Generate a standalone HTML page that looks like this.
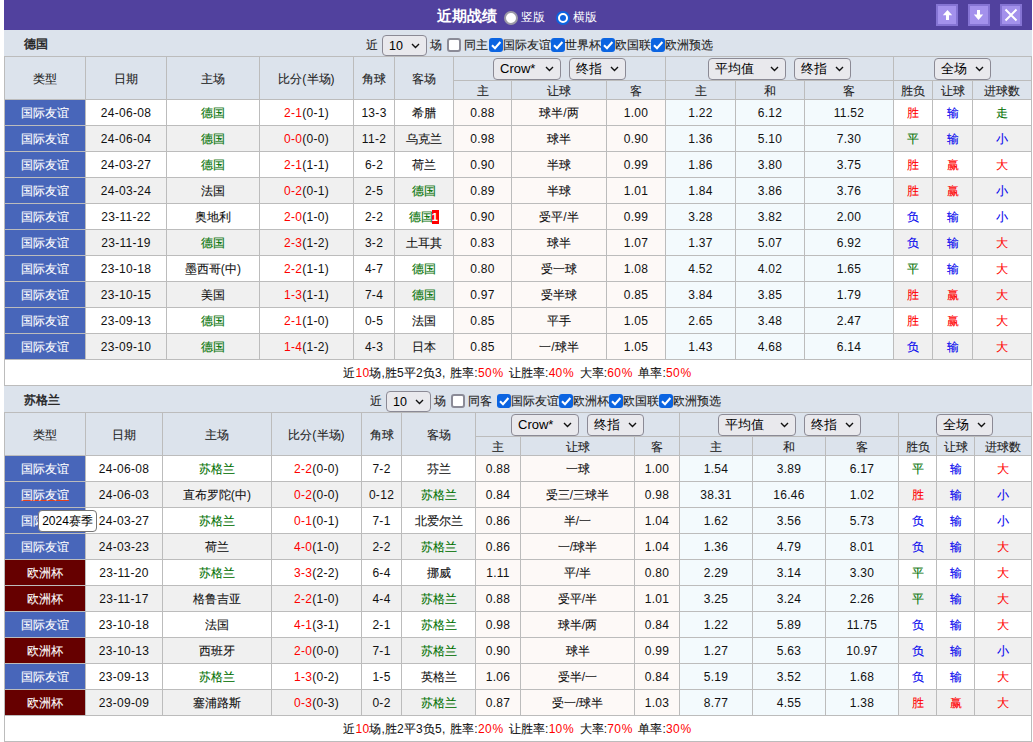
<!DOCTYPE html>
<html><head><meta charset="utf-8"><title>近期战绩</title>
<style>
html,body{margin:0;padding:0;background:#fff;}
body{width:1033px;height:742px;position:relative;overflow:hidden;font-family:"Liberation Sans",sans-serif;font-size:12px;color:#111;}
.c{position:absolute;text-align:center;white-space:nowrap;overflow:visible;letter-spacing:0.3px;}
.tn{position:absolute;font-weight:normal;-webkit-text-stroke:0.45px;color:#222;}
.sel{position:absolute;box-sizing:border-box;border:1px solid #8b8a95;border-radius:4px;background:#e9e9ed;font-size:13px;color:#000;white-space:nowrap;}
.chev{position:absolute;right:6px;top:50%;margin-top:-3px;}
.cb{position:absolute;box-sizing:border-box;width:14px;height:14px;border:2px solid #8b8b97;border-radius:3px;background:#fff;}
.cb.on{border:none;background:#0b64e1;}
.cb svg{position:absolute;left:0;top:0;}
.lb{position:absolute;height:26px;line-height:26px;padding-top:2px;color:#222;white-space:nowrap;}
.tb{position:absolute;top:4px;width:22px;height:22px;box-sizing:border-box;background:#a391ec;border:2px solid #8574d4;}
.tb svg{position:absolute;left:0;top:0;}
.sm{word-spacing:1px;}
.pc{display:inline-block;padding-left:0.5px;padding-right:1px;}
.k{-webkit-text-stroke:0.1px;letter-spacing:0;}
.bd{position:relative;left:-1px;top:-1px;display:inline-block;background:#f00;color:#fff;font-weight:bold;width:7px;height:14px;line-height:14px;font-size:11px;vertical-align:middle;text-align:center;}
</style></head><body>

<div style="position:absolute;left:4px;top:0px;width:1028px;height:30px;background:#51419e;"></div>
<div style="position:absolute;left:437px;top:1px;height:30px;line-height:30px;color:#fff;font-weight:bold;font-size:15px">近期战绩</div>
<div style="position:absolute;left:504px;top:11px;width:14px;height:14px;box-sizing:border-box;border-radius:50%;border:2px solid #9c9aa6;background:#fff"></div>
<div style="position:absolute;left:521px;top:2px;height:30px;line-height:30px;color:#fff;font-size:12px">竖版</div>
<div style="position:absolute;left:556px;top:11px;width:14px;height:14px;box-sizing:border-box;border-radius:50%;border:2px solid #0b64e1;background:#fff"><div style="position:absolute;left:2px;top:2px;width:6px;height:6px;border-radius:50%;background:#0b64e1"></div></div>
<div style="position:absolute;left:573px;top:2px;height:30px;line-height:30px;color:#fff;font-size:12px">横版</div>
<div class="tb" style="left:936px"><svg width="18" height="18" viewBox="0 0 18 18"><path d="M4.8 9.2 L9.5 4 L14.2 9.2 Z M8 9 H11 V14 H8 Z" fill="#fff"/></svg></div>
<div class="tb" style="left:968px"><svg width="18" height="18" viewBox="0 0 18 18"><path d="M7 4 H10 V9 H7 Z M3.8 8.6 H13.2 L8.5 14 Z" fill="#fff"/></svg></div>
<div class="tb" style="left:1000px"><svg width="18" height="18" viewBox="0 0 18 18"><path d="M3.5 3.5 L14.5 14.5 M14.5 3.5 L3.5 14.5" stroke="#fff" stroke-width="2"/></svg></div>
<div style="position:absolute;left:4px;top:30px;width:1028px;height:26px;background:#dce3ec;"></div>
<div class="tn" style="left:24px;top:31px;height:26px;line-height:26px">德国</div>
<div class="lb" style="left:366px;top:30px;"><span class="k">近</span></div>
<div class="sel" style="left:382px;top:35px;width:45px;height:21px;line-height:19px"><span style="padding-left:6px;font-size:12.5px">10</span><svg class="chev" width="9" height="6" viewBox="0 0 9 6"><path d="M1 1 L4.5 4.5 L8 1" fill="none" stroke="#111" stroke-width="1.4"/></svg></div>
<div class="lb" style="left:430px;top:30px;"><span class="k">场</span></div>
<div class="cb" style="left:447px;top:38px"></div>
<div class="lb" style="left:464px;top:30px;"><span class="k">同主</span></div>
<div class="cb on" style="left:489px;top:38px"><svg width="14" height="14" viewBox="0 0 14 14"><path d="M3 7.3 L6 10.3 L11.4 4" fill="none" stroke="#fff" stroke-width="2.1"/></svg></div>
<div class="lb" style="left:503px;top:30px;"><span class="k">国际友谊</span></div>
<div class="cb on" style="left:551px;top:38px"><svg width="14" height="14" viewBox="0 0 14 14"><path d="M3 7.3 L6 10.3 L11.4 4" fill="none" stroke="#fff" stroke-width="2.1"/></svg></div>
<div class="lb" style="left:565px;top:30px;"><span class="k">世界杯</span></div>
<div class="cb on" style="left:601px;top:38px"><svg width="14" height="14" viewBox="0 0 14 14"><path d="M3 7.3 L6 10.3 L11.4 4" fill="none" stroke="#fff" stroke-width="2.1"/></svg></div>
<div class="lb" style="left:615px;top:30px;"><span class="k">欧国联</span></div>
<div class="cb on" style="left:651px;top:38px"><svg width="14" height="14" viewBox="0 0 14 14"><path d="M3 7.3 L6 10.3 L11.4 4" fill="none" stroke="#fff" stroke-width="2.1"/></svg></div>
<div class="lb" style="left:665px;top:30px;"><span class="k">欧洲预选</span></div>
<div style="position:absolute;left:4px;top:56px;width:1028px;height:43px;background:#dce3ec;"></div>
<div style="position:absolute;left:5px;top:100px;width:1026px;height:25px;background:#ffffff;"></div>
<div style="position:absolute;left:454px;top:100px;width:211px;height:25px;background:#fdf9f7;"></div>
<div style="position:absolute;left:666px;top:100px;width:227px;height:25px;background:#f3fafd;"></div>
<div style="position:absolute;left:5px;top:100px;width:80px;height:25px;background:#4866ba;"></div>
<div style="position:absolute;left:5px;top:126px;width:1026px;height:25px;background:#f0f0f0;"></div>
<div style="position:absolute;left:454px;top:126px;width:211px;height:25px;background:#fdf9f7;"></div>
<div style="position:absolute;left:666px;top:126px;width:227px;height:25px;background:#f3fafd;"></div>
<div style="position:absolute;left:5px;top:126px;width:80px;height:25px;background:#4866ba;"></div>
<div style="position:absolute;left:5px;top:152px;width:1026px;height:25px;background:#ffffff;"></div>
<div style="position:absolute;left:454px;top:152px;width:211px;height:25px;background:#fdf9f7;"></div>
<div style="position:absolute;left:666px;top:152px;width:227px;height:25px;background:#f3fafd;"></div>
<div style="position:absolute;left:5px;top:152px;width:80px;height:25px;background:#4866ba;"></div>
<div style="position:absolute;left:5px;top:178px;width:1026px;height:25px;background:#f0f0f0;"></div>
<div style="position:absolute;left:454px;top:178px;width:211px;height:25px;background:#fdf9f7;"></div>
<div style="position:absolute;left:666px;top:178px;width:227px;height:25px;background:#f3fafd;"></div>
<div style="position:absolute;left:5px;top:178px;width:80px;height:25px;background:#4866ba;"></div>
<div style="position:absolute;left:5px;top:204px;width:1026px;height:25px;background:#ffffff;"></div>
<div style="position:absolute;left:454px;top:204px;width:211px;height:25px;background:#fdf9f7;"></div>
<div style="position:absolute;left:666px;top:204px;width:227px;height:25px;background:#f3fafd;"></div>
<div style="position:absolute;left:5px;top:204px;width:80px;height:25px;background:#4866ba;"></div>
<div style="position:absolute;left:5px;top:230px;width:1026px;height:25px;background:#f0f0f0;"></div>
<div style="position:absolute;left:454px;top:230px;width:211px;height:25px;background:#fdf9f7;"></div>
<div style="position:absolute;left:666px;top:230px;width:227px;height:25px;background:#f3fafd;"></div>
<div style="position:absolute;left:5px;top:230px;width:80px;height:25px;background:#4866ba;"></div>
<div style="position:absolute;left:5px;top:256px;width:1026px;height:25px;background:#ffffff;"></div>
<div style="position:absolute;left:454px;top:256px;width:211px;height:25px;background:#fdf9f7;"></div>
<div style="position:absolute;left:666px;top:256px;width:227px;height:25px;background:#f3fafd;"></div>
<div style="position:absolute;left:5px;top:256px;width:80px;height:25px;background:#4866ba;"></div>
<div style="position:absolute;left:5px;top:282px;width:1026px;height:25px;background:#f0f0f0;"></div>
<div style="position:absolute;left:454px;top:282px;width:211px;height:25px;background:#fdf9f7;"></div>
<div style="position:absolute;left:666px;top:282px;width:227px;height:25px;background:#f3fafd;"></div>
<div style="position:absolute;left:5px;top:282px;width:80px;height:25px;background:#4866ba;"></div>
<div style="position:absolute;left:5px;top:308px;width:1026px;height:25px;background:#ffffff;"></div>
<div style="position:absolute;left:454px;top:308px;width:211px;height:25px;background:#fdf9f7;"></div>
<div style="position:absolute;left:666px;top:308px;width:227px;height:25px;background:#f3fafd;"></div>
<div style="position:absolute;left:5px;top:308px;width:80px;height:25px;background:#4866ba;"></div>
<div style="position:absolute;left:5px;top:334px;width:1026px;height:25px;background:#f0f0f0;"></div>
<div style="position:absolute;left:454px;top:334px;width:211px;height:25px;background:#fdf9f7;"></div>
<div style="position:absolute;left:666px;top:334px;width:227px;height:25px;background:#f3fafd;"></div>
<div style="position:absolute;left:5px;top:334px;width:80px;height:25px;background:#4866ba;"></div>
<div style="position:absolute;left:5px;top:360px;width:1026px;height:25px;background:#ffffff;"></div>
<div style="position:absolute;left:4px;top:56px;width:1028px;height:1px;background:#bcbcbc;"></div>
<div style="position:absolute;left:453px;top:80px;width:578px;height:1px;background:#bcbcbc;"></div>
<div style="position:absolute;left:4px;top:99px;width:1028px;height:1px;background:#bcbcbc;"></div>
<div style="position:absolute;left:4px;top:125px;width:1028px;height:1px;background:#bcbcbc;"></div>
<div style="position:absolute;left:4px;top:151px;width:1028px;height:1px;background:#bcbcbc;"></div>
<div style="position:absolute;left:4px;top:177px;width:1028px;height:1px;background:#bcbcbc;"></div>
<div style="position:absolute;left:4px;top:203px;width:1028px;height:1px;background:#bcbcbc;"></div>
<div style="position:absolute;left:4px;top:229px;width:1028px;height:1px;background:#bcbcbc;"></div>
<div style="position:absolute;left:4px;top:255px;width:1028px;height:1px;background:#bcbcbc;"></div>
<div style="position:absolute;left:4px;top:281px;width:1028px;height:1px;background:#bcbcbc;"></div>
<div style="position:absolute;left:4px;top:307px;width:1028px;height:1px;background:#bcbcbc;"></div>
<div style="position:absolute;left:4px;top:333px;width:1028px;height:1px;background:#bcbcbc;"></div>
<div style="position:absolute;left:4px;top:359px;width:1028px;height:1px;background:#bcbcbc;"></div>
<div style="position:absolute;left:4px;top:385px;width:1028px;height:1px;background:#bcbcbc;"></div>
<div style="position:absolute;left:4px;top:56px;width:1px;height:330px;background:#bcbcbc;"></div>
<div style="position:absolute;left:1031px;top:56px;width:1px;height:330px;background:#bcbcbc;"></div>
<div style="position:absolute;left:85px;top:56px;width:1px;height:303px;background:#bcbcbc;"></div>
<div style="position:absolute;left:166px;top:56px;width:1px;height:303px;background:#bcbcbc;"></div>
<div style="position:absolute;left:259px;top:56px;width:1px;height:303px;background:#bcbcbc;"></div>
<div style="position:absolute;left:353px;top:56px;width:1px;height:303px;background:#bcbcbc;"></div>
<div style="position:absolute;left:394px;top:56px;width:1px;height:303px;background:#bcbcbc;"></div>
<div style="position:absolute;left:453px;top:56px;width:1px;height:303px;background:#bcbcbc;"></div>
<div style="position:absolute;left:511px;top:80px;width:1px;height:279px;background:#bcbcbc;"></div>
<div style="position:absolute;left:606px;top:80px;width:1px;height:279px;background:#bcbcbc;"></div>
<div style="position:absolute;left:665px;top:56px;width:1px;height:303px;background:#bcbcbc;"></div>
<div style="position:absolute;left:735px;top:80px;width:1px;height:279px;background:#bcbcbc;"></div>
<div style="position:absolute;left:804px;top:80px;width:1px;height:279px;background:#bcbcbc;"></div>
<div style="position:absolute;left:893px;top:56px;width:1px;height:303px;background:#bcbcbc;"></div>
<div style="position:absolute;left:932px;top:80px;width:1px;height:279px;background:#bcbcbc;"></div>
<div style="position:absolute;left:972px;top:80px;width:1px;height:279px;background:#bcbcbc;"></div>
<div class="sel" style="left:493px;top:58px;width:68px;height:22px;line-height:20px"><span style="padding-left:6px">Crow*</span><svg class="chev" width="9" height="6" viewBox="0 0 9 6"><path d="M1 1 L4.5 4.5 L8 1" fill="none" stroke="#111" stroke-width="1.4"/></svg></div>
<div class="sel" style="left:569px;top:58px;width:57px;height:22px;line-height:20px"><span style="padding-left:6px">终指</span><svg class="chev" width="9" height="6" viewBox="0 0 9 6"><path d="M1 1 L4.5 4.5 L8 1" fill="none" stroke="#111" stroke-width="1.4"/></svg></div>
<div class="sel" style="left:708px;top:58px;width:78px;height:22px;line-height:20px"><span style="padding-left:6px">平均值</span><svg class="chev" width="9" height="6" viewBox="0 0 9 6"><path d="M1 1 L4.5 4.5 L8 1" fill="none" stroke="#111" stroke-width="1.4"/></svg></div>
<div class="sel" style="left:794px;top:58px;width:57px;height:22px;line-height:20px"><span style="padding-left:6px">终指</span><svg class="chev" width="9" height="6" viewBox="0 0 9 6"><path d="M1 1 L4.5 4.5 L8 1" fill="none" stroke="#111" stroke-width="1.4"/></svg></div>
<div class="sel" style="left:934px;top:58px;width:57px;height:22px;line-height:20px"><span style="padding-left:6px">全场</span><svg class="chev" width="9" height="6" viewBox="0 0 9 6"><path d="M1 1 L4.5 4.5 L8 1" fill="none" stroke="#111" stroke-width="1.4"/></svg></div>
<div class="c" style="left:5px;top:58px;width:80px;height:42px;line-height:42px;color:#222"><span class="k">类型</span></div>
<div class="c" style="left:86px;top:58px;width:80px;height:42px;line-height:42px;color:#222"><span class="k">日期</span></div>
<div class="c" style="left:167px;top:58px;width:92px;height:42px;line-height:42px;color:#222"><span class="k">主场</span></div>
<div class="c" style="left:260px;top:58px;width:93px;height:42px;line-height:42px;color:#222"><span class="k">比分</span>(<span class="k">半场</span>)</div>
<div class="c" style="left:354px;top:58px;width:40px;height:42px;line-height:42px;color:#222"><span class="k">角球</span></div>
<div class="c" style="left:395px;top:58px;width:58px;height:42px;line-height:42px;color:#222"><span class="k">客场</span></div>
<div class="c" style="left:454px;top:82px;width:57px;height:18px;line-height:18px;color:#222"><span class="k">主</span></div>
<div class="c" style="left:512px;top:82px;width:94px;height:18px;line-height:18px;color:#222"><span class="k">让球</span></div>
<div class="c" style="left:607px;top:82px;width:58px;height:18px;line-height:18px;color:#222"><span class="k">客</span></div>
<div class="c" style="left:666px;top:82px;width:69px;height:18px;line-height:18px;color:#222"><span class="k">主</span></div>
<div class="c" style="left:736px;top:82px;width:68px;height:18px;line-height:18px;color:#222"><span class="k">和</span></div>
<div class="c" style="left:805px;top:82px;width:88px;height:18px;line-height:18px;color:#222"><span class="k">客</span></div>
<div class="c" style="left:894px;top:82px;width:38px;height:18px;line-height:18px;color:#222"><span class="k">胜负</span></div>
<div class="c" style="left:933px;top:82px;width:39px;height:18px;line-height:18px;color:#222"><span class="k">让球</span></div>
<div class="c" style="left:973px;top:82px;width:58px;height:18px;line-height:18px;color:#222"><span class="k">进球数</span></div>
<div class="c" style="left:5px;top:101px;width:80px;height:25px;line-height:25px;color:#fff"><span class="k">国际友谊</span></div>
<div class="c" style="left:86px;top:101px;width:80px;height:25px;line-height:25px;">24-06-08</div>
<div class="c" style="left:167px;top:101px;width:92px;height:25px;line-height:25px;color:#007000"><span class="k">德国</span></div>
<div class="c" style="left:260px;top:101px;width:93px;height:25px;line-height:25px;"><span style="color:#ff0000">2-1</span>(0-1)</div>
<div class="c" style="left:354px;top:101px;width:40px;height:25px;line-height:25px;">13-3</div>
<div class="c" style="left:395px;top:101px;width:58px;height:25px;line-height:25px;"><span class="k">希腊</span></div>
<div class="c" style="left:454px;top:101px;width:57px;height:25px;line-height:25px;">0.88</div>
<div class="c" style="left:512px;top:101px;width:94px;height:25px;line-height:25px;"><span class="k">球半</span>/<span class="k">两</span></div>
<div class="c" style="left:607px;top:101px;width:58px;height:25px;line-height:25px;">1.00</div>
<div class="c" style="left:666px;top:101px;width:69px;height:25px;line-height:25px;">1.22</div>
<div class="c" style="left:736px;top:101px;width:68px;height:25px;line-height:25px;">6.12</div>
<div class="c" style="left:805px;top:101px;width:88px;height:25px;line-height:25px;">11.52</div>
<div class="c" style="left:894px;top:101px;width:38px;height:25px;line-height:25px;color:#ff0000"><span class="k">胜</span></div>
<div class="c" style="left:933px;top:101px;width:39px;height:25px;line-height:25px;color:#0000ee"><span class="k">输</span></div>
<div class="c" style="left:973px;top:101px;width:58px;height:25px;line-height:25px;color:#007000"><span class="k">走</span></div>
<div class="c" style="left:5px;top:127px;width:80px;height:25px;line-height:25px;color:#fff"><span class="k">国际友谊</span></div>
<div class="c" style="left:86px;top:127px;width:80px;height:25px;line-height:25px;">24-06-04</div>
<div class="c" style="left:167px;top:127px;width:92px;height:25px;line-height:25px;color:#007000"><span class="k">德国</span></div>
<div class="c" style="left:260px;top:127px;width:93px;height:25px;line-height:25px;"><span style="color:#ff0000">0-0</span>(0-0)</div>
<div class="c" style="left:354px;top:127px;width:40px;height:25px;line-height:25px;">11-2</div>
<div class="c" style="left:395px;top:127px;width:58px;height:25px;line-height:25px;"><span class="k">乌克兰</span></div>
<div class="c" style="left:454px;top:127px;width:57px;height:25px;line-height:25px;">0.98</div>
<div class="c" style="left:512px;top:127px;width:94px;height:25px;line-height:25px;"><span class="k">球半</span></div>
<div class="c" style="left:607px;top:127px;width:58px;height:25px;line-height:25px;">0.90</div>
<div class="c" style="left:666px;top:127px;width:69px;height:25px;line-height:25px;">1.36</div>
<div class="c" style="left:736px;top:127px;width:68px;height:25px;line-height:25px;">5.10</div>
<div class="c" style="left:805px;top:127px;width:88px;height:25px;line-height:25px;">7.30</div>
<div class="c" style="left:894px;top:127px;width:38px;height:25px;line-height:25px;color:#007000"><span class="k">平</span></div>
<div class="c" style="left:933px;top:127px;width:39px;height:25px;line-height:25px;color:#0000ee"><span class="k">输</span></div>
<div class="c" style="left:973px;top:127px;width:58px;height:25px;line-height:25px;color:#0000ee"><span class="k">小</span></div>
<div class="c" style="left:5px;top:153px;width:80px;height:25px;line-height:25px;color:#fff"><span class="k">国际友谊</span></div>
<div class="c" style="left:86px;top:153px;width:80px;height:25px;line-height:25px;">24-03-27</div>
<div class="c" style="left:167px;top:153px;width:92px;height:25px;line-height:25px;color:#007000"><span class="k">德国</span></div>
<div class="c" style="left:260px;top:153px;width:93px;height:25px;line-height:25px;"><span style="color:#ff0000">2-1</span>(1-1)</div>
<div class="c" style="left:354px;top:153px;width:40px;height:25px;line-height:25px;">6-2</div>
<div class="c" style="left:395px;top:153px;width:58px;height:25px;line-height:25px;"><span class="k">荷兰</span></div>
<div class="c" style="left:454px;top:153px;width:57px;height:25px;line-height:25px;">0.90</div>
<div class="c" style="left:512px;top:153px;width:94px;height:25px;line-height:25px;"><span class="k">半球</span></div>
<div class="c" style="left:607px;top:153px;width:58px;height:25px;line-height:25px;">0.99</div>
<div class="c" style="left:666px;top:153px;width:69px;height:25px;line-height:25px;">1.86</div>
<div class="c" style="left:736px;top:153px;width:68px;height:25px;line-height:25px;">3.80</div>
<div class="c" style="left:805px;top:153px;width:88px;height:25px;line-height:25px;">3.75</div>
<div class="c" style="left:894px;top:153px;width:38px;height:25px;line-height:25px;color:#ff0000"><span class="k">胜</span></div>
<div class="c" style="left:933px;top:153px;width:39px;height:25px;line-height:25px;color:#ff0000"><span class="k">赢</span></div>
<div class="c" style="left:973px;top:153px;width:58px;height:25px;line-height:25px;color:#ff0000"><span class="k">大</span></div>
<div class="c" style="left:5px;top:179px;width:80px;height:25px;line-height:25px;color:#fff"><span class="k">国际友谊</span></div>
<div class="c" style="left:86px;top:179px;width:80px;height:25px;line-height:25px;">24-03-24</div>
<div class="c" style="left:167px;top:179px;width:92px;height:25px;line-height:25px;"><span class="k">法国</span></div>
<div class="c" style="left:260px;top:179px;width:93px;height:25px;line-height:25px;"><span style="color:#ff0000">0-2</span>(0-1)</div>
<div class="c" style="left:354px;top:179px;width:40px;height:25px;line-height:25px;">2-5</div>
<div class="c" style="left:395px;top:179px;width:58px;height:25px;line-height:25px;color:#007000"><span class="k">德国</span></div>
<div class="c" style="left:454px;top:179px;width:57px;height:25px;line-height:25px;">0.89</div>
<div class="c" style="left:512px;top:179px;width:94px;height:25px;line-height:25px;"><span class="k">半球</span></div>
<div class="c" style="left:607px;top:179px;width:58px;height:25px;line-height:25px;">1.01</div>
<div class="c" style="left:666px;top:179px;width:69px;height:25px;line-height:25px;">1.84</div>
<div class="c" style="left:736px;top:179px;width:68px;height:25px;line-height:25px;">3.86</div>
<div class="c" style="left:805px;top:179px;width:88px;height:25px;line-height:25px;">3.76</div>
<div class="c" style="left:894px;top:179px;width:38px;height:25px;line-height:25px;color:#ff0000"><span class="k">胜</span></div>
<div class="c" style="left:933px;top:179px;width:39px;height:25px;line-height:25px;color:#ff0000"><span class="k">赢</span></div>
<div class="c" style="left:973px;top:179px;width:58px;height:25px;line-height:25px;color:#0000ee"><span class="k">小</span></div>
<div class="c" style="left:5px;top:205px;width:80px;height:25px;line-height:25px;color:#fff"><span class="k">国际友谊</span></div>
<div class="c" style="left:86px;top:205px;width:80px;height:25px;line-height:25px;">23-11-22</div>
<div class="c" style="left:167px;top:205px;width:92px;height:25px;line-height:25px;"><span class="k">奥地利</span></div>
<div class="c" style="left:260px;top:205px;width:93px;height:25px;line-height:25px;"><span style="color:#ff0000">2-0</span>(1-0)</div>
<div class="c" style="left:354px;top:205px;width:40px;height:25px;line-height:25px;">2-2</div>
<div class="c" style="left:395px;top:205px;width:58px;height:25px;line-height:25px;color:#007000"><span class="k">德国</span><span class="bd">1</span></div>
<div class="c" style="left:454px;top:205px;width:57px;height:25px;line-height:25px;">0.90</div>
<div class="c" style="left:512px;top:205px;width:94px;height:25px;line-height:25px;"><span class="k">受平</span>/<span class="k">半</span></div>
<div class="c" style="left:607px;top:205px;width:58px;height:25px;line-height:25px;">0.99</div>
<div class="c" style="left:666px;top:205px;width:69px;height:25px;line-height:25px;">3.28</div>
<div class="c" style="left:736px;top:205px;width:68px;height:25px;line-height:25px;">3.82</div>
<div class="c" style="left:805px;top:205px;width:88px;height:25px;line-height:25px;">2.00</div>
<div class="c" style="left:894px;top:205px;width:38px;height:25px;line-height:25px;color:#0000ee"><span class="k">负</span></div>
<div class="c" style="left:933px;top:205px;width:39px;height:25px;line-height:25px;color:#0000ee"><span class="k">输</span></div>
<div class="c" style="left:973px;top:205px;width:58px;height:25px;line-height:25px;color:#0000ee"><span class="k">小</span></div>
<div class="c" style="left:5px;top:231px;width:80px;height:25px;line-height:25px;color:#fff"><span class="k">国际友谊</span></div>
<div class="c" style="left:86px;top:231px;width:80px;height:25px;line-height:25px;">23-11-19</div>
<div class="c" style="left:167px;top:231px;width:92px;height:25px;line-height:25px;color:#007000"><span class="k">德国</span></div>
<div class="c" style="left:260px;top:231px;width:93px;height:25px;line-height:25px;"><span style="color:#ff0000">2-3</span>(1-2)</div>
<div class="c" style="left:354px;top:231px;width:40px;height:25px;line-height:25px;">3-2</div>
<div class="c" style="left:395px;top:231px;width:58px;height:25px;line-height:25px;"><span class="k">土耳其</span></div>
<div class="c" style="left:454px;top:231px;width:57px;height:25px;line-height:25px;">0.83</div>
<div class="c" style="left:512px;top:231px;width:94px;height:25px;line-height:25px;"><span class="k">球半</span></div>
<div class="c" style="left:607px;top:231px;width:58px;height:25px;line-height:25px;">1.07</div>
<div class="c" style="left:666px;top:231px;width:69px;height:25px;line-height:25px;">1.37</div>
<div class="c" style="left:736px;top:231px;width:68px;height:25px;line-height:25px;">5.07</div>
<div class="c" style="left:805px;top:231px;width:88px;height:25px;line-height:25px;">6.92</div>
<div class="c" style="left:894px;top:231px;width:38px;height:25px;line-height:25px;color:#0000ee"><span class="k">负</span></div>
<div class="c" style="left:933px;top:231px;width:39px;height:25px;line-height:25px;color:#0000ee"><span class="k">输</span></div>
<div class="c" style="left:973px;top:231px;width:58px;height:25px;line-height:25px;color:#ff0000"><span class="k">大</span></div>
<div class="c" style="left:5px;top:257px;width:80px;height:25px;line-height:25px;color:#fff"><span class="k">国际友谊</span></div>
<div class="c" style="left:86px;top:257px;width:80px;height:25px;line-height:25px;">23-10-18</div>
<div class="c" style="left:167px;top:257px;width:92px;height:25px;line-height:25px;"><span class="k">墨西哥</span>(<span class="k">中</span>)</div>
<div class="c" style="left:260px;top:257px;width:93px;height:25px;line-height:25px;"><span style="color:#ff0000">2-2</span>(1-1)</div>
<div class="c" style="left:354px;top:257px;width:40px;height:25px;line-height:25px;">4-7</div>
<div class="c" style="left:395px;top:257px;width:58px;height:25px;line-height:25px;color:#007000"><span class="k">德国</span></div>
<div class="c" style="left:454px;top:257px;width:57px;height:25px;line-height:25px;">0.80</div>
<div class="c" style="left:512px;top:257px;width:94px;height:25px;line-height:25px;"><span class="k">受一球</span></div>
<div class="c" style="left:607px;top:257px;width:58px;height:25px;line-height:25px;">1.08</div>
<div class="c" style="left:666px;top:257px;width:69px;height:25px;line-height:25px;">4.52</div>
<div class="c" style="left:736px;top:257px;width:68px;height:25px;line-height:25px;">4.02</div>
<div class="c" style="left:805px;top:257px;width:88px;height:25px;line-height:25px;">1.65</div>
<div class="c" style="left:894px;top:257px;width:38px;height:25px;line-height:25px;color:#007000"><span class="k">平</span></div>
<div class="c" style="left:933px;top:257px;width:39px;height:25px;line-height:25px;color:#0000ee"><span class="k">输</span></div>
<div class="c" style="left:973px;top:257px;width:58px;height:25px;line-height:25px;color:#ff0000"><span class="k">大</span></div>
<div class="c" style="left:5px;top:283px;width:80px;height:25px;line-height:25px;color:#fff"><span class="k">国际友谊</span></div>
<div class="c" style="left:86px;top:283px;width:80px;height:25px;line-height:25px;">23-10-15</div>
<div class="c" style="left:167px;top:283px;width:92px;height:25px;line-height:25px;"><span class="k">美国</span></div>
<div class="c" style="left:260px;top:283px;width:93px;height:25px;line-height:25px;"><span style="color:#ff0000">1-3</span>(1-1)</div>
<div class="c" style="left:354px;top:283px;width:40px;height:25px;line-height:25px;">7-4</div>
<div class="c" style="left:395px;top:283px;width:58px;height:25px;line-height:25px;color:#007000"><span class="k">德国</span></div>
<div class="c" style="left:454px;top:283px;width:57px;height:25px;line-height:25px;">0.97</div>
<div class="c" style="left:512px;top:283px;width:94px;height:25px;line-height:25px;"><span class="k">受半球</span></div>
<div class="c" style="left:607px;top:283px;width:58px;height:25px;line-height:25px;">0.85</div>
<div class="c" style="left:666px;top:283px;width:69px;height:25px;line-height:25px;">3.84</div>
<div class="c" style="left:736px;top:283px;width:68px;height:25px;line-height:25px;">3.85</div>
<div class="c" style="left:805px;top:283px;width:88px;height:25px;line-height:25px;">1.79</div>
<div class="c" style="left:894px;top:283px;width:38px;height:25px;line-height:25px;color:#ff0000"><span class="k">胜</span></div>
<div class="c" style="left:933px;top:283px;width:39px;height:25px;line-height:25px;color:#ff0000"><span class="k">赢</span></div>
<div class="c" style="left:973px;top:283px;width:58px;height:25px;line-height:25px;color:#ff0000"><span class="k">大</span></div>
<div class="c" style="left:5px;top:309px;width:80px;height:25px;line-height:25px;color:#fff"><span class="k">国际友谊</span></div>
<div class="c" style="left:86px;top:309px;width:80px;height:25px;line-height:25px;">23-09-13</div>
<div class="c" style="left:167px;top:309px;width:92px;height:25px;line-height:25px;color:#007000"><span class="k">德国</span></div>
<div class="c" style="left:260px;top:309px;width:93px;height:25px;line-height:25px;"><span style="color:#ff0000">2-1</span>(1-0)</div>
<div class="c" style="left:354px;top:309px;width:40px;height:25px;line-height:25px;">0-5</div>
<div class="c" style="left:395px;top:309px;width:58px;height:25px;line-height:25px;"><span class="k">法国</span></div>
<div class="c" style="left:454px;top:309px;width:57px;height:25px;line-height:25px;">0.85</div>
<div class="c" style="left:512px;top:309px;width:94px;height:25px;line-height:25px;"><span class="k">平手</span></div>
<div class="c" style="left:607px;top:309px;width:58px;height:25px;line-height:25px;">1.05</div>
<div class="c" style="left:666px;top:309px;width:69px;height:25px;line-height:25px;">2.65</div>
<div class="c" style="left:736px;top:309px;width:68px;height:25px;line-height:25px;">3.48</div>
<div class="c" style="left:805px;top:309px;width:88px;height:25px;line-height:25px;">2.47</div>
<div class="c" style="left:894px;top:309px;width:38px;height:25px;line-height:25px;color:#ff0000"><span class="k">胜</span></div>
<div class="c" style="left:933px;top:309px;width:39px;height:25px;line-height:25px;color:#ff0000"><span class="k">赢</span></div>
<div class="c" style="left:973px;top:309px;width:58px;height:25px;line-height:25px;color:#ff0000"><span class="k">大</span></div>
<div class="c" style="left:5px;top:335px;width:80px;height:25px;line-height:25px;color:#fff"><span class="k">国际友谊</span></div>
<div class="c" style="left:86px;top:335px;width:80px;height:25px;line-height:25px;">23-09-10</div>
<div class="c" style="left:167px;top:335px;width:92px;height:25px;line-height:25px;color:#007000"><span class="k">德国</span></div>
<div class="c" style="left:260px;top:335px;width:93px;height:25px;line-height:25px;"><span style="color:#ff0000">1-4</span>(1-2)</div>
<div class="c" style="left:354px;top:335px;width:40px;height:25px;line-height:25px;">4-3</div>
<div class="c" style="left:395px;top:335px;width:58px;height:25px;line-height:25px;"><span class="k">日本</span></div>
<div class="c" style="left:454px;top:335px;width:57px;height:25px;line-height:25px;">0.85</div>
<div class="c" style="left:512px;top:335px;width:94px;height:25px;line-height:25px;"><span class="k">一</span>/<span class="k">球半</span></div>
<div class="c" style="left:607px;top:335px;width:58px;height:25px;line-height:25px;">1.05</div>
<div class="c" style="left:666px;top:335px;width:69px;height:25px;line-height:25px;">1.43</div>
<div class="c" style="left:736px;top:335px;width:68px;height:25px;line-height:25px;">4.68</div>
<div class="c" style="left:805px;top:335px;width:88px;height:25px;line-height:25px;">6.14</div>
<div class="c" style="left:894px;top:335px;width:38px;height:25px;line-height:25px;color:#0000ee"><span class="k">负</span></div>
<div class="c" style="left:933px;top:335px;width:39px;height:25px;line-height:25px;color:#0000ee"><span class="k">输</span></div>
<div class="c" style="left:973px;top:335px;width:58px;height:25px;line-height:25px;color:#ff0000"><span class="k">大</span></div>
<div class="c" style="left:5px;top:361px;width:1026px;height:25px;line-height:25px;word-spacing:1px"><span class="k">近</span><span style="color:#ff0000">10</span><span class="k">场</span>,<span class="k">胜</span>5<span class="k">平</span>2<span class="k">负</span>3, <span class="k">胜率</span>:<span style="color:#ff0000">50<span class="pc">%</span></span> <span class="k">让胜率</span>:<span style="color:#ff0000">40<span class="pc">%</span></span> <span class="k">大率</span>:<span style="color:#ff0000">60<span class="pc">%</span></span> <span class="k">单率</span>:<span style="color:#ff0000">50<span class="pc">%</span></span></div>
<div style="position:absolute;left:4px;top:386px;width:1028px;height:26px;background:#dce3ec;"></div>
<div class="tn" style="left:24px;top:387px;height:26px;line-height:26px">苏格兰</div>
<div class="lb" style="left:370px;top:386px;"><span class="k">近</span></div>
<div class="sel" style="left:386px;top:391px;width:45px;height:21px;line-height:19px"><span style="padding-left:6px;font-size:12.5px">10</span><svg class="chev" width="9" height="6" viewBox="0 0 9 6"><path d="M1 1 L4.5 4.5 L8 1" fill="none" stroke="#111" stroke-width="1.4"/></svg></div>
<div class="lb" style="left:434px;top:386px;"><span class="k">场</span></div>
<div class="cb" style="left:451px;top:394px"></div>
<div class="lb" style="left:468px;top:386px;"><span class="k">同客</span></div>
<div class="cb on" style="left:497px;top:394px"><svg width="14" height="14" viewBox="0 0 14 14"><path d="M3 7.3 L6 10.3 L11.4 4" fill="none" stroke="#fff" stroke-width="2.1"/></svg></div>
<div class="lb" style="left:511px;top:386px;"><span class="k">国际友谊</span></div>
<div class="cb on" style="left:559px;top:394px"><svg width="14" height="14" viewBox="0 0 14 14"><path d="M3 7.3 L6 10.3 L11.4 4" fill="none" stroke="#fff" stroke-width="2.1"/></svg></div>
<div class="lb" style="left:573px;top:386px;"><span class="k">欧洲杯</span></div>
<div class="cb on" style="left:609px;top:394px"><svg width="14" height="14" viewBox="0 0 14 14"><path d="M3 7.3 L6 10.3 L11.4 4" fill="none" stroke="#fff" stroke-width="2.1"/></svg></div>
<div class="lb" style="left:623px;top:386px;"><span class="k">欧国联</span></div>
<div class="cb on" style="left:659px;top:394px"><svg width="14" height="14" viewBox="0 0 14 14"><path d="M3 7.3 L6 10.3 L11.4 4" fill="none" stroke="#fff" stroke-width="2.1"/></svg></div>
<div class="lb" style="left:673px;top:386px;"><span class="k">欧洲预选</span></div>
<div style="position:absolute;left:4px;top:412px;width:1028px;height:43px;background:#dce3ec;"></div>
<div style="position:absolute;left:5px;top:456px;width:1026px;height:25px;background:#ffffff;"></div>
<div style="position:absolute;left:476px;top:456px;width:203px;height:25px;background:#fdf9f7;"></div>
<div style="position:absolute;left:680px;top:456px;width:218px;height:25px;background:#f3fafd;"></div>
<div style="position:absolute;left:5px;top:456px;width:80px;height:25px;background:#4866ba;"></div>
<div style="position:absolute;left:5px;top:482px;width:1026px;height:25px;background:#f0f0f0;"></div>
<div style="position:absolute;left:476px;top:482px;width:203px;height:25px;background:#fdf9f7;"></div>
<div style="position:absolute;left:680px;top:482px;width:218px;height:25px;background:#f3fafd;"></div>
<div style="position:absolute;left:5px;top:482px;width:80px;height:25px;background:#4866ba;"></div>
<div style="position:absolute;left:5px;top:508px;width:1026px;height:25px;background:#ffffff;"></div>
<div style="position:absolute;left:476px;top:508px;width:203px;height:25px;background:#fdf9f7;"></div>
<div style="position:absolute;left:680px;top:508px;width:218px;height:25px;background:#f3fafd;"></div>
<div style="position:absolute;left:5px;top:508px;width:80px;height:25px;background:#4866ba;"></div>
<div style="position:absolute;left:5px;top:534px;width:1026px;height:25px;background:#f0f0f0;"></div>
<div style="position:absolute;left:476px;top:534px;width:203px;height:25px;background:#fdf9f7;"></div>
<div style="position:absolute;left:680px;top:534px;width:218px;height:25px;background:#f3fafd;"></div>
<div style="position:absolute;left:5px;top:534px;width:80px;height:25px;background:#4866ba;"></div>
<div style="position:absolute;left:5px;top:560px;width:1026px;height:25px;background:#ffffff;"></div>
<div style="position:absolute;left:476px;top:560px;width:203px;height:25px;background:#fdf9f7;"></div>
<div style="position:absolute;left:680px;top:560px;width:218px;height:25px;background:#f3fafd;"></div>
<div style="position:absolute;left:5px;top:560px;width:80px;height:25px;background:#660000;"></div>
<div style="position:absolute;left:5px;top:586px;width:1026px;height:25px;background:#f0f0f0;"></div>
<div style="position:absolute;left:476px;top:586px;width:203px;height:25px;background:#fdf9f7;"></div>
<div style="position:absolute;left:680px;top:586px;width:218px;height:25px;background:#f3fafd;"></div>
<div style="position:absolute;left:5px;top:586px;width:80px;height:25px;background:#660000;"></div>
<div style="position:absolute;left:5px;top:612px;width:1026px;height:25px;background:#ffffff;"></div>
<div style="position:absolute;left:476px;top:612px;width:203px;height:25px;background:#fdf9f7;"></div>
<div style="position:absolute;left:680px;top:612px;width:218px;height:25px;background:#f3fafd;"></div>
<div style="position:absolute;left:5px;top:612px;width:80px;height:25px;background:#4866ba;"></div>
<div style="position:absolute;left:5px;top:638px;width:1026px;height:25px;background:#f0f0f0;"></div>
<div style="position:absolute;left:476px;top:638px;width:203px;height:25px;background:#fdf9f7;"></div>
<div style="position:absolute;left:680px;top:638px;width:218px;height:25px;background:#f3fafd;"></div>
<div style="position:absolute;left:5px;top:638px;width:80px;height:25px;background:#660000;"></div>
<div style="position:absolute;left:5px;top:664px;width:1026px;height:25px;background:#ffffff;"></div>
<div style="position:absolute;left:476px;top:664px;width:203px;height:25px;background:#fdf9f7;"></div>
<div style="position:absolute;left:680px;top:664px;width:218px;height:25px;background:#f3fafd;"></div>
<div style="position:absolute;left:5px;top:664px;width:80px;height:25px;background:#4866ba;"></div>
<div style="position:absolute;left:5px;top:690px;width:1026px;height:25px;background:#f0f0f0;"></div>
<div style="position:absolute;left:476px;top:690px;width:203px;height:25px;background:#fdf9f7;"></div>
<div style="position:absolute;left:680px;top:690px;width:218px;height:25px;background:#f3fafd;"></div>
<div style="position:absolute;left:5px;top:690px;width:80px;height:25px;background:#660000;"></div>
<div style="position:absolute;left:5px;top:716px;width:1026px;height:25px;background:#ffffff;"></div>
<div style="position:absolute;left:4px;top:412px;width:1028px;height:1px;background:#bcbcbc;"></div>
<div style="position:absolute;left:475px;top:436px;width:556px;height:1px;background:#bcbcbc;"></div>
<div style="position:absolute;left:4px;top:455px;width:1028px;height:1px;background:#bcbcbc;"></div>
<div style="position:absolute;left:4px;top:481px;width:1028px;height:1px;background:#bcbcbc;"></div>
<div style="position:absolute;left:4px;top:507px;width:1028px;height:1px;background:#bcbcbc;"></div>
<div style="position:absolute;left:4px;top:533px;width:1028px;height:1px;background:#bcbcbc;"></div>
<div style="position:absolute;left:4px;top:559px;width:1028px;height:1px;background:#bcbcbc;"></div>
<div style="position:absolute;left:4px;top:585px;width:1028px;height:1px;background:#bcbcbc;"></div>
<div style="position:absolute;left:4px;top:611px;width:1028px;height:1px;background:#bcbcbc;"></div>
<div style="position:absolute;left:4px;top:637px;width:1028px;height:1px;background:#bcbcbc;"></div>
<div style="position:absolute;left:4px;top:663px;width:1028px;height:1px;background:#bcbcbc;"></div>
<div style="position:absolute;left:4px;top:689px;width:1028px;height:1px;background:#bcbcbc;"></div>
<div style="position:absolute;left:4px;top:715px;width:1028px;height:1px;background:#bcbcbc;"></div>
<div style="position:absolute;left:4px;top:741px;width:1028px;height:1px;background:#bcbcbc;"></div>
<div style="position:absolute;left:4px;top:412px;width:1px;height:330px;background:#bcbcbc;"></div>
<div style="position:absolute;left:1031px;top:412px;width:1px;height:330px;background:#bcbcbc;"></div>
<div style="position:absolute;left:85px;top:412px;width:1px;height:303px;background:#bcbcbc;"></div>
<div style="position:absolute;left:162px;top:412px;width:1px;height:303px;background:#bcbcbc;"></div>
<div style="position:absolute;left:271px;top:412px;width:1px;height:303px;background:#bcbcbc;"></div>
<div style="position:absolute;left:361px;top:412px;width:1px;height:303px;background:#bcbcbc;"></div>
<div style="position:absolute;left:401px;top:412px;width:1px;height:303px;background:#bcbcbc;"></div>
<div style="position:absolute;left:475px;top:412px;width:1px;height:303px;background:#bcbcbc;"></div>
<div style="position:absolute;left:520px;top:436px;width:1px;height:279px;background:#bcbcbc;"></div>
<div style="position:absolute;left:634px;top:436px;width:1px;height:279px;background:#bcbcbc;"></div>
<div style="position:absolute;left:679px;top:412px;width:1px;height:303px;background:#bcbcbc;"></div>
<div style="position:absolute;left:752px;top:436px;width:1px;height:279px;background:#bcbcbc;"></div>
<div style="position:absolute;left:825px;top:436px;width:1px;height:279px;background:#bcbcbc;"></div>
<div style="position:absolute;left:898px;top:412px;width:1px;height:303px;background:#bcbcbc;"></div>
<div style="position:absolute;left:936px;top:436px;width:1px;height:279px;background:#bcbcbc;"></div>
<div style="position:absolute;left:974px;top:436px;width:1px;height:279px;background:#bcbcbc;"></div>
<div class="sel" style="left:511px;top:414px;width:68px;height:22px;line-height:20px"><span style="padding-left:6px">Crow*</span><svg class="chev" width="9" height="6" viewBox="0 0 9 6"><path d="M1 1 L4.5 4.5 L8 1" fill="none" stroke="#111" stroke-width="1.4"/></svg></div>
<div class="sel" style="left:587px;top:414px;width:57px;height:22px;line-height:20px"><span style="padding-left:6px">终指</span><svg class="chev" width="9" height="6" viewBox="0 0 9 6"><path d="M1 1 L4.5 4.5 L8 1" fill="none" stroke="#111" stroke-width="1.4"/></svg></div>
<div class="sel" style="left:718px;top:414px;width:78px;height:22px;line-height:20px"><span style="padding-left:6px">平均值</span><svg class="chev" width="9" height="6" viewBox="0 0 9 6"><path d="M1 1 L4.5 4.5 L8 1" fill="none" stroke="#111" stroke-width="1.4"/></svg></div>
<div class="sel" style="left:804px;top:414px;width:57px;height:22px;line-height:20px"><span style="padding-left:6px">终指</span><svg class="chev" width="9" height="6" viewBox="0 0 9 6"><path d="M1 1 L4.5 4.5 L8 1" fill="none" stroke="#111" stroke-width="1.4"/></svg></div>
<div class="sel" style="left:936px;top:414px;width:57px;height:22px;line-height:20px"><span style="padding-left:6px">全场</span><svg class="chev" width="9" height="6" viewBox="0 0 9 6"><path d="M1 1 L4.5 4.5 L8 1" fill="none" stroke="#111" stroke-width="1.4"/></svg></div>
<div class="c" style="left:5px;top:414px;width:80px;height:42px;line-height:42px;color:#222"><span class="k">类型</span></div>
<div class="c" style="left:86px;top:414px;width:76px;height:42px;line-height:42px;color:#222"><span class="k">日期</span></div>
<div class="c" style="left:163px;top:414px;width:108px;height:42px;line-height:42px;color:#222"><span class="k">主场</span></div>
<div class="c" style="left:272px;top:414px;width:89px;height:42px;line-height:42px;color:#222"><span class="k">比分</span>(<span class="k">半场</span>)</div>
<div class="c" style="left:362px;top:414px;width:39px;height:42px;line-height:42px;color:#222"><span class="k">角球</span></div>
<div class="c" style="left:402px;top:414px;width:73px;height:42px;line-height:42px;color:#222"><span class="k">客场</span></div>
<div class="c" style="left:476px;top:438px;width:44px;height:18px;line-height:18px;color:#222"><span class="k">主</span></div>
<div class="c" style="left:521px;top:438px;width:113px;height:18px;line-height:18px;color:#222"><span class="k">让球</span></div>
<div class="c" style="left:635px;top:438px;width:44px;height:18px;line-height:18px;color:#222"><span class="k">客</span></div>
<div class="c" style="left:680px;top:438px;width:72px;height:18px;line-height:18px;color:#222"><span class="k">主</span></div>
<div class="c" style="left:753px;top:438px;width:72px;height:18px;line-height:18px;color:#222"><span class="k">和</span></div>
<div class="c" style="left:826px;top:438px;width:72px;height:18px;line-height:18px;color:#222"><span class="k">客</span></div>
<div class="c" style="left:899px;top:438px;width:37px;height:18px;line-height:18px;color:#222"><span class="k">胜负</span></div>
<div class="c" style="left:937px;top:438px;width:37px;height:18px;line-height:18px;color:#222"><span class="k">让球</span></div>
<div class="c" style="left:975px;top:438px;width:56px;height:18px;line-height:18px;color:#222"><span class="k">进球数</span></div>
<div class="c" style="left:5px;top:457px;width:80px;height:25px;line-height:25px;color:#fff"><span class="k">国际友谊</span></div>
<div class="c" style="left:86px;top:457px;width:76px;height:25px;line-height:25px;">24-06-08</div>
<div class="c" style="left:163px;top:457px;width:108px;height:25px;line-height:25px;color:#007000"><span class="k">苏格兰</span></div>
<div class="c" style="left:272px;top:457px;width:89px;height:25px;line-height:25px;"><span style="color:#ff0000">2-2</span>(0-0)</div>
<div class="c" style="left:362px;top:457px;width:39px;height:25px;line-height:25px;">7-2</div>
<div class="c" style="left:402px;top:457px;width:73px;height:25px;line-height:25px;"><span class="k">芬兰</span></div>
<div class="c" style="left:476px;top:457px;width:44px;height:25px;line-height:25px;">0.88</div>
<div class="c" style="left:521px;top:457px;width:113px;height:25px;line-height:25px;"><span class="k">一球</span></div>
<div class="c" style="left:635px;top:457px;width:44px;height:25px;line-height:25px;">1.00</div>
<div class="c" style="left:680px;top:457px;width:72px;height:25px;line-height:25px;">1.54</div>
<div class="c" style="left:753px;top:457px;width:72px;height:25px;line-height:25px;">3.89</div>
<div class="c" style="left:826px;top:457px;width:72px;height:25px;line-height:25px;">6.17</div>
<div class="c" style="left:899px;top:457px;width:37px;height:25px;line-height:25px;color:#007000"><span class="k">平</span></div>
<div class="c" style="left:937px;top:457px;width:37px;height:25px;line-height:25px;color:#0000ee"><span class="k">输</span></div>
<div class="c" style="left:975px;top:457px;width:56px;height:25px;line-height:25px;color:#ff0000"><span class="k">大</span></div>
<div style="position:absolute;left:21px;top:500px;width:48px;height:1px;background:#e4401c;"></div>
<div class="c" style="left:5px;top:483px;width:80px;height:25px;line-height:25px;color:#fff"><span class="k">国际友谊</span></div>
<div class="c" style="left:86px;top:483px;width:76px;height:25px;line-height:25px;">24-06-03</div>
<div class="c" style="left:163px;top:483px;width:108px;height:25px;line-height:25px;"><span class="k">直布罗陀</span>(<span class="k">中</span>)</div>
<div class="c" style="left:272px;top:483px;width:89px;height:25px;line-height:25px;"><span style="color:#ff0000">0-2</span>(0-0)</div>
<div class="c" style="left:362px;top:483px;width:39px;height:25px;line-height:25px;">0-12</div>
<div class="c" style="left:402px;top:483px;width:73px;height:25px;line-height:25px;color:#007000"><span class="k">苏格兰</span></div>
<div class="c" style="left:476px;top:483px;width:44px;height:25px;line-height:25px;">0.84</div>
<div class="c" style="left:521px;top:483px;width:113px;height:25px;line-height:25px;"><span class="k">受三</span>/<span class="k">三球半</span></div>
<div class="c" style="left:635px;top:483px;width:44px;height:25px;line-height:25px;">0.98</div>
<div class="c" style="left:680px;top:483px;width:72px;height:25px;line-height:25px;">38.31</div>
<div class="c" style="left:753px;top:483px;width:72px;height:25px;line-height:25px;">16.46</div>
<div class="c" style="left:826px;top:483px;width:72px;height:25px;line-height:25px;">1.02</div>
<div class="c" style="left:899px;top:483px;width:37px;height:25px;line-height:25px;color:#ff0000"><span class="k">胜</span></div>
<div class="c" style="left:937px;top:483px;width:37px;height:25px;line-height:25px;color:#0000ee"><span class="k">输</span></div>
<div class="c" style="left:975px;top:483px;width:56px;height:25px;line-height:25px;color:#0000ee"><span class="k">小</span></div>
<div class="c" style="left:5px;top:509px;width:80px;height:25px;line-height:25px;color:#fff"><span class="k">国际友谊</span></div>
<div class="c" style="left:86px;top:509px;width:76px;height:25px;line-height:25px;">24-03-27</div>
<div class="c" style="left:163px;top:509px;width:108px;height:25px;line-height:25px;color:#007000"><span class="k">苏格兰</span></div>
<div class="c" style="left:272px;top:509px;width:89px;height:25px;line-height:25px;"><span style="color:#ff0000">0-1</span>(0-1)</div>
<div class="c" style="left:362px;top:509px;width:39px;height:25px;line-height:25px;">7-1</div>
<div class="c" style="left:402px;top:509px;width:73px;height:25px;line-height:25px;"><span class="k">北爱尔兰</span></div>
<div class="c" style="left:476px;top:509px;width:44px;height:25px;line-height:25px;">0.86</div>
<div class="c" style="left:521px;top:509px;width:113px;height:25px;line-height:25px;"><span class="k">半</span>/<span class="k">一</span></div>
<div class="c" style="left:635px;top:509px;width:44px;height:25px;line-height:25px;">1.04</div>
<div class="c" style="left:680px;top:509px;width:72px;height:25px;line-height:25px;">1.62</div>
<div class="c" style="left:753px;top:509px;width:72px;height:25px;line-height:25px;">3.56</div>
<div class="c" style="left:826px;top:509px;width:72px;height:25px;line-height:25px;">5.73</div>
<div class="c" style="left:899px;top:509px;width:37px;height:25px;line-height:25px;color:#0000ee"><span class="k">负</span></div>
<div class="c" style="left:937px;top:509px;width:37px;height:25px;line-height:25px;color:#0000ee"><span class="k">输</span></div>
<div class="c" style="left:975px;top:509px;width:56px;height:25px;line-height:25px;color:#0000ee"><span class="k">小</span></div>
<div class="c" style="left:5px;top:535px;width:80px;height:25px;line-height:25px;color:#fff"><span class="k">国际友谊</span></div>
<div class="c" style="left:86px;top:535px;width:76px;height:25px;line-height:25px;">24-03-23</div>
<div class="c" style="left:163px;top:535px;width:108px;height:25px;line-height:25px;"><span class="k">荷兰</span></div>
<div class="c" style="left:272px;top:535px;width:89px;height:25px;line-height:25px;"><span style="color:#ff0000">4-0</span>(1-0)</div>
<div class="c" style="left:362px;top:535px;width:39px;height:25px;line-height:25px;">2-2</div>
<div class="c" style="left:402px;top:535px;width:73px;height:25px;line-height:25px;color:#007000"><span class="k">苏格兰</span></div>
<div class="c" style="left:476px;top:535px;width:44px;height:25px;line-height:25px;">0.86</div>
<div class="c" style="left:521px;top:535px;width:113px;height:25px;line-height:25px;"><span class="k">一</span>/<span class="k">球半</span></div>
<div class="c" style="left:635px;top:535px;width:44px;height:25px;line-height:25px;">1.04</div>
<div class="c" style="left:680px;top:535px;width:72px;height:25px;line-height:25px;">1.36</div>
<div class="c" style="left:753px;top:535px;width:72px;height:25px;line-height:25px;">4.79</div>
<div class="c" style="left:826px;top:535px;width:72px;height:25px;line-height:25px;">8.01</div>
<div class="c" style="left:899px;top:535px;width:37px;height:25px;line-height:25px;color:#0000ee"><span class="k">负</span></div>
<div class="c" style="left:937px;top:535px;width:37px;height:25px;line-height:25px;color:#0000ee"><span class="k">输</span></div>
<div class="c" style="left:975px;top:535px;width:56px;height:25px;line-height:25px;color:#ff0000"><span class="k">大</span></div>
<div class="c" style="left:5px;top:561px;width:80px;height:25px;line-height:25px;color:#fff"><span class="k">欧洲杯</span></div>
<div class="c" style="left:86px;top:561px;width:76px;height:25px;line-height:25px;">23-11-20</div>
<div class="c" style="left:163px;top:561px;width:108px;height:25px;line-height:25px;color:#007000"><span class="k">苏格兰</span></div>
<div class="c" style="left:272px;top:561px;width:89px;height:25px;line-height:25px;"><span style="color:#ff0000">3-3</span>(2-2)</div>
<div class="c" style="left:362px;top:561px;width:39px;height:25px;line-height:25px;">6-4</div>
<div class="c" style="left:402px;top:561px;width:73px;height:25px;line-height:25px;"><span class="k">挪威</span></div>
<div class="c" style="left:476px;top:561px;width:44px;height:25px;line-height:25px;">1.11</div>
<div class="c" style="left:521px;top:561px;width:113px;height:25px;line-height:25px;"><span class="k">平</span>/<span class="k">半</span></div>
<div class="c" style="left:635px;top:561px;width:44px;height:25px;line-height:25px;">0.80</div>
<div class="c" style="left:680px;top:561px;width:72px;height:25px;line-height:25px;">2.29</div>
<div class="c" style="left:753px;top:561px;width:72px;height:25px;line-height:25px;">3.14</div>
<div class="c" style="left:826px;top:561px;width:72px;height:25px;line-height:25px;">3.30</div>
<div class="c" style="left:899px;top:561px;width:37px;height:25px;line-height:25px;color:#007000"><span class="k">平</span></div>
<div class="c" style="left:937px;top:561px;width:37px;height:25px;line-height:25px;color:#0000ee"><span class="k">输</span></div>
<div class="c" style="left:975px;top:561px;width:56px;height:25px;line-height:25px;color:#ff0000"><span class="k">大</span></div>
<div class="c" style="left:5px;top:587px;width:80px;height:25px;line-height:25px;color:#fff"><span class="k">欧洲杯</span></div>
<div class="c" style="left:86px;top:587px;width:76px;height:25px;line-height:25px;">23-11-17</div>
<div class="c" style="left:163px;top:587px;width:108px;height:25px;line-height:25px;"><span class="k">格鲁吉亚</span></div>
<div class="c" style="left:272px;top:587px;width:89px;height:25px;line-height:25px;"><span style="color:#ff0000">2-2</span>(1-0)</div>
<div class="c" style="left:362px;top:587px;width:39px;height:25px;line-height:25px;">4-4</div>
<div class="c" style="left:402px;top:587px;width:73px;height:25px;line-height:25px;color:#007000"><span class="k">苏格兰</span></div>
<div class="c" style="left:476px;top:587px;width:44px;height:25px;line-height:25px;">0.88</div>
<div class="c" style="left:521px;top:587px;width:113px;height:25px;line-height:25px;"><span class="k">受平</span>/<span class="k">半</span></div>
<div class="c" style="left:635px;top:587px;width:44px;height:25px;line-height:25px;">1.01</div>
<div class="c" style="left:680px;top:587px;width:72px;height:25px;line-height:25px;">3.25</div>
<div class="c" style="left:753px;top:587px;width:72px;height:25px;line-height:25px;">3.24</div>
<div class="c" style="left:826px;top:587px;width:72px;height:25px;line-height:25px;">2.26</div>
<div class="c" style="left:899px;top:587px;width:37px;height:25px;line-height:25px;color:#007000"><span class="k">平</span></div>
<div class="c" style="left:937px;top:587px;width:37px;height:25px;line-height:25px;color:#0000ee"><span class="k">输</span></div>
<div class="c" style="left:975px;top:587px;width:56px;height:25px;line-height:25px;color:#ff0000"><span class="k">大</span></div>
<div class="c" style="left:5px;top:613px;width:80px;height:25px;line-height:25px;color:#fff"><span class="k">国际友谊</span></div>
<div class="c" style="left:86px;top:613px;width:76px;height:25px;line-height:25px;">23-10-18</div>
<div class="c" style="left:163px;top:613px;width:108px;height:25px;line-height:25px;"><span class="k">法国</span></div>
<div class="c" style="left:272px;top:613px;width:89px;height:25px;line-height:25px;"><span style="color:#ff0000">4-1</span>(3-1)</div>
<div class="c" style="left:362px;top:613px;width:39px;height:25px;line-height:25px;">2-1</div>
<div class="c" style="left:402px;top:613px;width:73px;height:25px;line-height:25px;color:#007000"><span class="k">苏格兰</span></div>
<div class="c" style="left:476px;top:613px;width:44px;height:25px;line-height:25px;">0.98</div>
<div class="c" style="left:521px;top:613px;width:113px;height:25px;line-height:25px;"><span class="k">球半</span>/<span class="k">两</span></div>
<div class="c" style="left:635px;top:613px;width:44px;height:25px;line-height:25px;">0.84</div>
<div class="c" style="left:680px;top:613px;width:72px;height:25px;line-height:25px;">1.22</div>
<div class="c" style="left:753px;top:613px;width:72px;height:25px;line-height:25px;">5.89</div>
<div class="c" style="left:826px;top:613px;width:72px;height:25px;line-height:25px;">11.75</div>
<div class="c" style="left:899px;top:613px;width:37px;height:25px;line-height:25px;color:#0000ee"><span class="k">负</span></div>
<div class="c" style="left:937px;top:613px;width:37px;height:25px;line-height:25px;color:#0000ee"><span class="k">输</span></div>
<div class="c" style="left:975px;top:613px;width:56px;height:25px;line-height:25px;color:#ff0000"><span class="k">大</span></div>
<div class="c" style="left:5px;top:639px;width:80px;height:25px;line-height:25px;color:#fff"><span class="k">欧洲杯</span></div>
<div class="c" style="left:86px;top:639px;width:76px;height:25px;line-height:25px;">23-10-13</div>
<div class="c" style="left:163px;top:639px;width:108px;height:25px;line-height:25px;"><span class="k">西班牙</span></div>
<div class="c" style="left:272px;top:639px;width:89px;height:25px;line-height:25px;"><span style="color:#ff0000">2-0</span>(0-0)</div>
<div class="c" style="left:362px;top:639px;width:39px;height:25px;line-height:25px;">7-1</div>
<div class="c" style="left:402px;top:639px;width:73px;height:25px;line-height:25px;color:#007000"><span class="k">苏格兰</span></div>
<div class="c" style="left:476px;top:639px;width:44px;height:25px;line-height:25px;">0.90</div>
<div class="c" style="left:521px;top:639px;width:113px;height:25px;line-height:25px;"><span class="k">球半</span></div>
<div class="c" style="left:635px;top:639px;width:44px;height:25px;line-height:25px;">0.99</div>
<div class="c" style="left:680px;top:639px;width:72px;height:25px;line-height:25px;">1.27</div>
<div class="c" style="left:753px;top:639px;width:72px;height:25px;line-height:25px;">5.63</div>
<div class="c" style="left:826px;top:639px;width:72px;height:25px;line-height:25px;">10.97</div>
<div class="c" style="left:899px;top:639px;width:37px;height:25px;line-height:25px;color:#0000ee"><span class="k">负</span></div>
<div class="c" style="left:937px;top:639px;width:37px;height:25px;line-height:25px;color:#0000ee"><span class="k">输</span></div>
<div class="c" style="left:975px;top:639px;width:56px;height:25px;line-height:25px;color:#0000ee"><span class="k">小</span></div>
<div class="c" style="left:5px;top:665px;width:80px;height:25px;line-height:25px;color:#fff"><span class="k">国际友谊</span></div>
<div class="c" style="left:86px;top:665px;width:76px;height:25px;line-height:25px;">23-09-13</div>
<div class="c" style="left:163px;top:665px;width:108px;height:25px;line-height:25px;color:#007000"><span class="k">苏格兰</span></div>
<div class="c" style="left:272px;top:665px;width:89px;height:25px;line-height:25px;"><span style="color:#ff0000">1-3</span>(0-2)</div>
<div class="c" style="left:362px;top:665px;width:39px;height:25px;line-height:25px;">1-5</div>
<div class="c" style="left:402px;top:665px;width:73px;height:25px;line-height:25px;"><span class="k">英格兰</span></div>
<div class="c" style="left:476px;top:665px;width:44px;height:25px;line-height:25px;">1.06</div>
<div class="c" style="left:521px;top:665px;width:113px;height:25px;line-height:25px;"><span class="k">受半</span>/<span class="k">一</span></div>
<div class="c" style="left:635px;top:665px;width:44px;height:25px;line-height:25px;">0.84</div>
<div class="c" style="left:680px;top:665px;width:72px;height:25px;line-height:25px;">5.19</div>
<div class="c" style="left:753px;top:665px;width:72px;height:25px;line-height:25px;">3.52</div>
<div class="c" style="left:826px;top:665px;width:72px;height:25px;line-height:25px;">1.68</div>
<div class="c" style="left:899px;top:665px;width:37px;height:25px;line-height:25px;color:#0000ee"><span class="k">负</span></div>
<div class="c" style="left:937px;top:665px;width:37px;height:25px;line-height:25px;color:#0000ee"><span class="k">输</span></div>
<div class="c" style="left:975px;top:665px;width:56px;height:25px;line-height:25px;color:#ff0000"><span class="k">大</span></div>
<div class="c" style="left:5px;top:691px;width:80px;height:25px;line-height:25px;color:#fff"><span class="k">欧洲杯</span></div>
<div class="c" style="left:86px;top:691px;width:76px;height:25px;line-height:25px;">23-09-09</div>
<div class="c" style="left:163px;top:691px;width:108px;height:25px;line-height:25px;"><span class="k">塞浦路斯</span></div>
<div class="c" style="left:272px;top:691px;width:89px;height:25px;line-height:25px;"><span style="color:#ff0000">0-3</span>(0-3)</div>
<div class="c" style="left:362px;top:691px;width:39px;height:25px;line-height:25px;">0-2</div>
<div class="c" style="left:402px;top:691px;width:73px;height:25px;line-height:25px;color:#007000"><span class="k">苏格兰</span></div>
<div class="c" style="left:476px;top:691px;width:44px;height:25px;line-height:25px;">0.87</div>
<div class="c" style="left:521px;top:691px;width:113px;height:25px;line-height:25px;"><span class="k">受一</span>/<span class="k">球半</span></div>
<div class="c" style="left:635px;top:691px;width:44px;height:25px;line-height:25px;">1.03</div>
<div class="c" style="left:680px;top:691px;width:72px;height:25px;line-height:25px;">8.77</div>
<div class="c" style="left:753px;top:691px;width:72px;height:25px;line-height:25px;">4.55</div>
<div class="c" style="left:826px;top:691px;width:72px;height:25px;line-height:25px;">1.38</div>
<div class="c" style="left:899px;top:691px;width:37px;height:25px;line-height:25px;color:#ff0000"><span class="k">胜</span></div>
<div class="c" style="left:937px;top:691px;width:37px;height:25px;line-height:25px;color:#ff0000"><span class="k">赢</span></div>
<div class="c" style="left:975px;top:691px;width:56px;height:25px;line-height:25px;color:#ff0000"><span class="k">大</span></div>
<div class="c" style="left:5px;top:717px;width:1026px;height:25px;line-height:25px;word-spacing:1px"><span class="k">近</span><span style="color:#ff0000">10</span><span class="k">场</span>,<span class="k">胜</span>2<span class="k">平</span>3<span class="k">负</span>5, <span class="k">胜率</span>:<span style="color:#ff0000">20<span class="pc">%</span></span> <span class="k">让胜率</span>:<span style="color:#ff0000">10<span class="pc">%</span></span> <span class="k">大率</span>:<span style="color:#ff0000">70<span class="pc">%</span></span> <span class="k">单率</span>:<span style="color:#ff0000">30<span class="pc">%</span></span></div>
<div style="position:absolute;left:38px;top:510px;width:59px;height:22px;box-sizing:border-box;border:1px solid #767676;border-radius:4px;background:#fff;color:#000;font-size:12px;line-height:21px;text-align:center;white-space:nowrap">2024赛季</div>
</body></html>
